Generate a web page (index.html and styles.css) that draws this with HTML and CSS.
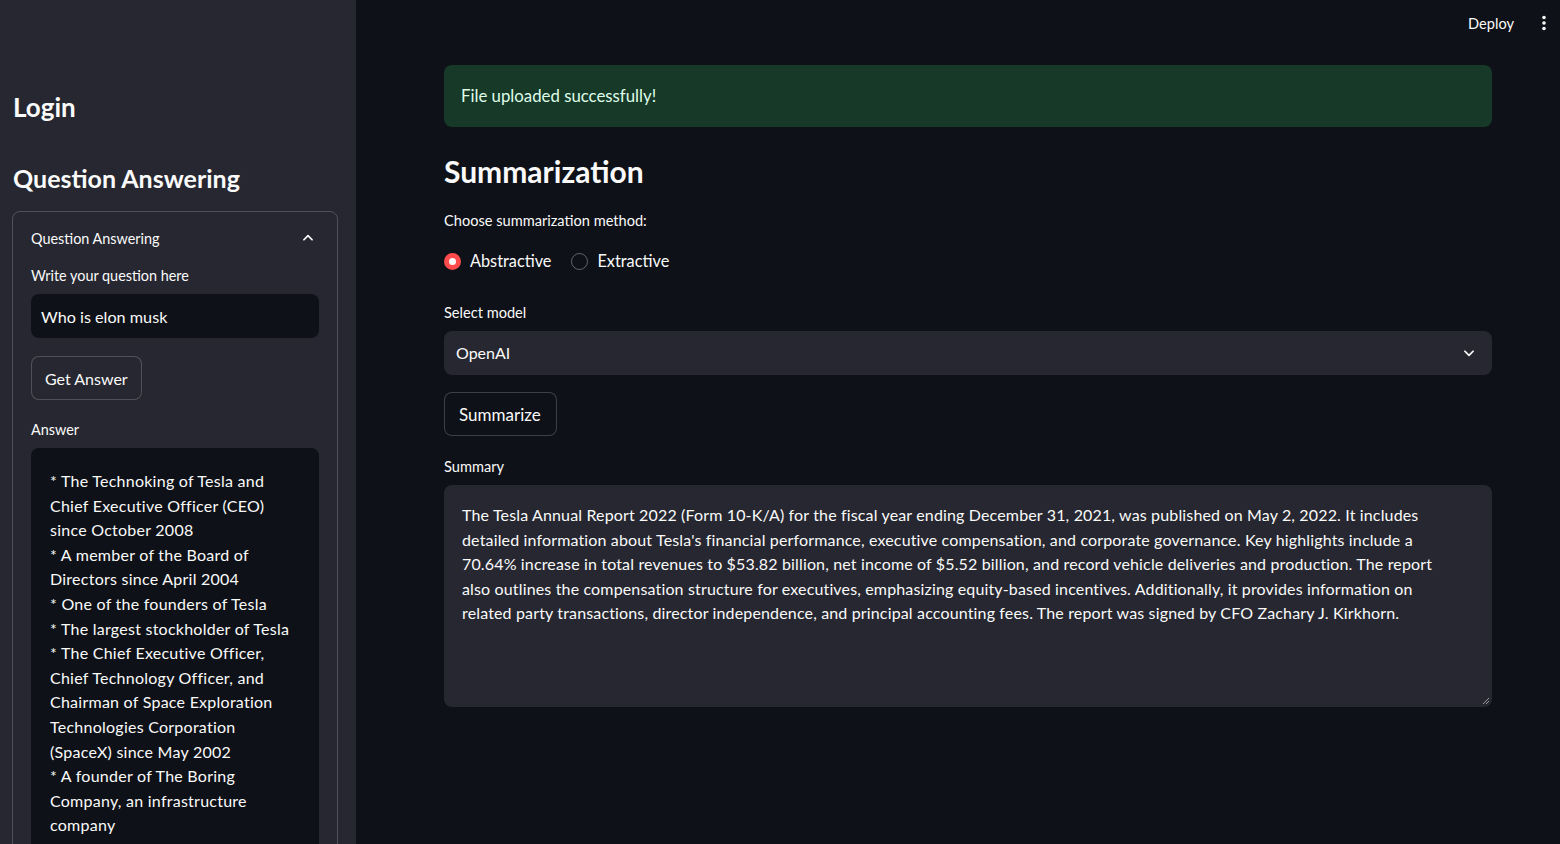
FILE: index.html
```html
<!DOCTYPE html>
<html lang="en">
<head>
<meta charset="utf-8">
<title>Summarization</title>
<link rel="stylesheet" href="styles.css">
</head>
<body>
<div class="app">
  <aside class="sidebar">
    <h2 class="side-title login">Login</h2>
    <h2 class="side-title qa">Question Answering</h2>
    <div class="expander">
      <div class="exp-head">
        <span>Question Answering</span>
        <svg class="chev-up" width="14" height="14" viewBox="0 0 24 24"><path d="M5 15l7-7 7 7" fill="none" stroke="#fafafa" stroke-width="3" stroke-linecap="round" stroke-linejoin="round"/></svg>
      </div>
      <div class="exp-body">
        <label class="lbl">Write your question here</label>
        <div class="text-input">Who is elon musk</div>
        <button class="btn">Get Answer</button>
        <label class="lbl answer-lbl">Answer</label>
        <div class="answer-box">* The Technoking of Tesla and Chief Executive Officer (CEO) since October 2008<br>* A member of the Board of Directors since April 2004<br>* One of the founders of Tesla<br>* The largest stockholder of Tesla<br>* The Chief Executive Officer, Chief Technology Officer, and Chairman of Space Exploration Technologies Corporation (SpaceX) since May 2002<br>* A founder of The Boring Company, an infrastructure company<br>* A co-founder of Neuralink</div>
      </div>
    </div>
  </aside>
  <main class="main">
    <header class="topbar">
      <span class="deploy">Deploy</span>
      <svg class="kebab" width="6" height="16" viewBox="0 0 6 16"><circle cx="3" cy="2.5" r="1.8" fill="#fafafa"/><circle cx="3" cy="8" r="1.8" fill="#fafafa"/><circle cx="3" cy="13.5" r="1.8" fill="#fafafa"/></svg>
    </header>
    <section class="content">
      <div class="alert">File uploaded successfully!</div>
      <h2 class="main-title">Summarization</h2>
      <label class="lbl">Choose summarization method:</label>
      <div class="radios">
        <span class="radio"><span class="dot on"></span>Abstractive</span>
        <span class="radio"><span class="dot"></span>Extractive</span>
      </div>
      <label class="lbl model-lbl">Select model</label>
      <div class="select">
        <span>OpenAI</span>
        <svg width="14" height="14" viewBox="0 0 24 24"><path d="M5 9l7 7 7-7" fill="none" stroke="#fafafa" stroke-width="3" stroke-linecap="round" stroke-linejoin="round"/></svg>
      </div>
      <button class="btn sum-btn">Summarize</button>
      <label class="lbl sum-lbl">Summary</label>
      <div class="textarea">The Tesla Annual Report 2022 (Form 10-K/A) for the fiscal year ending December 31, 2021, was published on May 2, 2022. It includes detailed information about Tesla's financial performance, executive compensation, and corporate governance. Key highlights include a 70.64% increase in total revenues to $53.82 billion, net income of $5.52 billion, and record vehicle deliveries and production. The report also outlines the compensation structure for executives, emphasizing equity-based incentives. Additionally, it provides information on related party transactions, director independence, and principal accounting fees. The report was signed by CFO Zachary J. Kirkhorn.
        <svg class="grip" width="8" height="8" viewBox="0 0 8 8"><path d="M1 7L7 1M4 7L7 4" stroke="#9a9aa0" stroke-width="1"/></svg>
      </div>
    </section>
  </main>
</div>
</body>
</html>
```

FILE: styles.css
```css
* { box-sizing: border-box; }
html, body { margin: 0; padding: 0; height: 100%; }
body {
  background: #0e1117;
  color: #fafafa;
  font-family: "Source Sans Pro", Lato, "Noto Sans", sans-serif;
  overflow: hidden;
}
.app { display: flex; height: 844px; }
.sidebar {
  width: 356px;
  flex: none;
  background: #262730;
  padding: 88px 18px 0 12px;
  overflow: hidden;
}
.side-title {
  margin: 0;
  font-weight: 700;
  font-size: 26px;
  line-height: 38px;
  padding-left: 1px;
}
.side-title.qa { margin-top: 33px; font-size: 25px; }
.expander {
  margin-top: 14px;
  border: 1px solid rgba(250,250,250,0.2);
  border-radius: 8px;
  padding: 0 18px;
}
.exp-head {
  height: 52px;
  display: flex;
  align-items: center;
  justify-content: space-between;
  font-size: 14.4px;
}
.chev-up { margin-right: 4px; }
.lbl { display: block; font-size: 14.6px; line-height: 20px; }
.exp-body .lbl { font-size: 14.4px; }
.exp-body .lbl:first-child { margin-top: 2px; }
.text-input {
  margin-top: 8px;
  height: 44px;
  background: #0e1117;
  border-radius: 8px;
  padding: 0 10px;
  display: flex;
  align-items: center;
  font-size: 16.2px;
}
.btn {
  display: inline-flex;
  align-items: center;
  height: 44px;
  padding: 0 13px;
  border: 1px solid rgba(250,250,250,0.2);
  border-radius: 8px;
  background: transparent;
  color: #fafafa;
  font: inherit;
  font-size: 16px;
  margin-top: 18px;
}
.exp-body .btn { background: #262730; }
.answer-lbl { margin-top: 20px; }
.answer-box {
  margin-top: 8px;
  background: #0e1117;
  border-radius: 8px;
  padding: 21px 27px 20px 19px;
  font-size: 16px;
  letter-spacing: 0.25px;
  line-height: 24.6px;
  height: 420px;
}
.main { flex: 1; display: flex; flex-direction: column; }
.topbar {
  height: 46px;
  display: flex;
  align-items: center;
  justify-content: flex-end;
  padding-right: 13px;
  font-size: 14.6px;
}
.deploy { margin-right: 27px; }
.content { padding: 19px 68px 0 88px; }
.alert {
  height: 62px;
  background: #173928;
  color: #dffde9;
  border-radius: 8px;
  display: flex;
  align-items: center;
  padding-left: 17px;
  padding-bottom: 1px;
  font-size: 16.8px;
}
.main-title {
  margin: 22px 0 0;
  font-weight: 700;
  font-size: 30px;
  line-height: 44px;
}
.main-title + .lbl { margin-top: 18px; }
.radios {
  display: flex;
  gap: 20px;
  margin-top: 18px;
  font-size: 16.3px;
  line-height: 24px;
}
.radio { display: inline-flex; align-items: center; }
.dot {
  width: 17px; height: 17px;
  border-radius: 50%;
  border: 1px solid rgba(250,250,250,0.35);
  margin-right: 9px;
  display: inline-block;
}
.dot.on {
  border: 5.5px solid #ff4b4b;
  background: #fafafa;
}
.model-lbl { margin-top: 30px; }
.select {
  margin-top: 8px;
  height: 44px;
  background: #262730;
  border-radius: 8px;
  display: flex;
  align-items: center;
  justify-content: space-between;
  padding: 0 16px 1px 12px;
  font-size: 16px;
}
.sum-btn { margin-top: 17px; background: #0e1117; padding: 0 15px 0 14px; font-size: 17px; }
.sum-lbl { margin-top: 21px; }
.textarea {
  position: relative;
  margin-top: 8px;
  height: 222px;
  background: #262730;
  border-radius: 8px;
  padding: 18px 42px 17px 18px;
  font-size: 16px;
  letter-spacing: 0.15px;
  line-height: 24.6px;
}
.grip { position: absolute; right: 2px; bottom: 2px; }
```
